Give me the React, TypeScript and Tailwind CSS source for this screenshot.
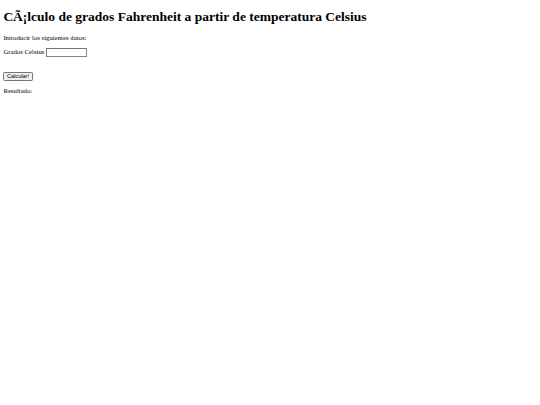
export default function App() {
  return (
    <div className="[zoom:0.421875] w-[1280px] min-h-[960px] bg-white text-black font-['Liberation_Serif',serif] text-[16px] px-[8px] pt-px">
      <h1 className="text-[32px] font-bold mt-[20.44px] mb-[21.44px] leading-[normal]">
        CÃ¡lculo de grados Fahrenheit a partir de temperatura Celsius
      </h1>
      <p className="my-[16px] leading-[normal]">Introducir los siguientes datos:</p>
      <form className="leading-[normal]" onSubmit={(e) => e.preventDefault()}>
        <div>
          Grados Celsius{" "}
          <input
            type="text"
            className="w-[97px] h-[21px] align-baseline bg-white border-2 border-[#858585] border-t-[#767676] border-l-[#767676] px-[2px] py-px text-[13.33px] font-['Liberation_Sans',sans-serif] outline-none"
          />
        </div>
        <div className="h-[36px]" />
        <div>
          <button
            type="submit"
            className="h-[21px] px-[6px] py-px bg-[#efefef] border-2 border-[#767676] rounded-[3px] text-[13.33px] font-['Liberation_Sans',sans-serif] text-black leading-none"
          >
            Calcular!
          </button>
        </div>
      </form>
      <p className="mt-[14px] mb-[16px] leading-[normal]">Resultado:</p>
    </div>
  );
}
